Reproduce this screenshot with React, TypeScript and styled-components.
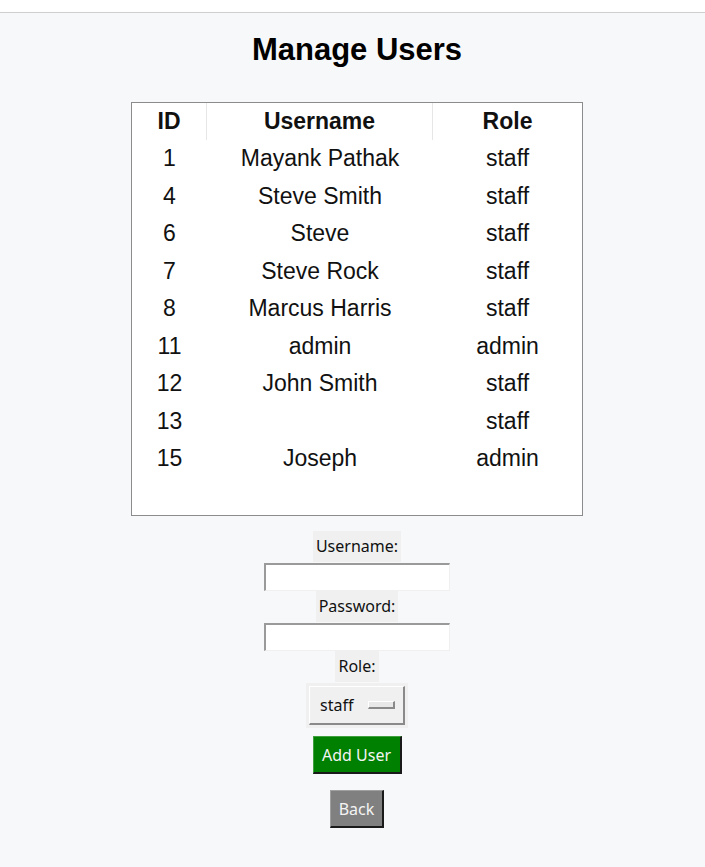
import React from "react";
import styled, { createGlobalStyle } from "styled-components";

const GlobalStyle = createGlobalStyle`
  html, body {
    margin: 0;
    padding: 0;
    background: #f7f8fa;
  }
`;

const TopBar = styled.div`
  height: 12px;
  background: #ffffff;
  border-bottom: 1px solid #cfcfcf;
`;

const Page = styled.div`
  display: flex;
  flex-direction: column;
  align-items: center;
  padding-left: 9px;
  padding-bottom: 38px;
`;

const Title = styled.h1`
  margin: 19px 0 0;
  height: 70px;
  font-family: "Liberation Sans", Arial, sans-serif;
  font-size: 31px;
  line-height: 36px;
  font-weight: bold;
  color: #000;
`;

const TableBox = styled.div`
  width: 450px;
  height: 412px;
  border: 1px solid #8c8c8c;
  background: #ffffff;
  font-family: "Liberation Sans", Arial, sans-serif;
  color: #111;
`;

const Row = styled.div<{ $head?: boolean }>`
  display: grid;
  grid-template-columns: 75px 226px 149px;
  height: ${(p) => (p.$head ? "37px" : "37.5px")};
  font-size: 23px;
  font-weight: ${(p) => (p.$head ? "bold" : "normal")};
`;

const Cell = styled.div<{ $head?: boolean; $last?: boolean }>`
  display: flex;
  align-items: center;
  justify-content: center;
  border-right: ${(p) =>
    p.$head && !p.$last ? "1px solid #e6e6e6" : "none"};
`;

const Form = styled.div`
  display: flex;
  flex-direction: column;
  align-items: center;
  margin-top: 15px;
  font-family: "Noto Sans", "Open Sans", sans-serif;
  font-size: 16px;
  color: #111;
`;

const Label = styled.div`
  background: #f0f0f0;
  padding: 0 3px;
  height: 31px;
  line-height: 31px;
`;

const Entry = styled.input`
  box-sizing: border-box;
  width: 186px;
  height: 28px;
  margin: 1px 0 0;
  padding: 0 3px;
  background: #fff;
  border-style: solid;
  border-width: 2px 1px 1px 2px;
  border-color: #9a9a9a #f0f0f0 #f0f0f0 #9a9a9a;
  outline: none;
  font: inherit;
`;

const MenuFrame = styled.div`
  margin-top: 1px;
  padding: 3px;
  background: #f0f0f0;
`;

const MenuButton = styled.div`
  box-sizing: border-box;
  display: flex;
  align-items: center;
  width: 96px;
  height: 39px;
  padding: 0 8px 0 10px;
  background: #f0f0f0;
  border-style: solid;
  border-width: 1px 2px 2px 1px;
  border-color: #ffffff #8a8a8a #8a8a8a #ffffff;
  font-size: 16px;
`;

const Indicator = styled.span`
  margin-left: auto;
  width: 24px;
  height: 5px;
  background: #e8e8e8;
  border-style: solid;
  border-width: 1px 2px 2px 1px;
  border-color: #ffffff #8a8a8a #8a8a8a #ffffff;
`;

const Button = styled.button<{ $bg: string; $top: number; $width: number }>`
  box-sizing: border-box;
  margin-top: ${(p) => p.$top}px;
  width: ${(p) => p.$width}px;
  height: 38px;
  padding: 0;
  background: ${(p) => p.$bg};
  color: #f4f4f4;
  border-style: solid;
  border-width: 1px 2px 2px 1px;
  border-color: rgba(255, 255, 255, 0.25) #1a1a1a #1a1a1a rgba(255, 255, 255, 0.25);
  font-family: "Noto Sans", "Open Sans", sans-serif;
  font-size: 16px;
  cursor: pointer;
`;

const users = [
  { id: 1, name: "Mayank Pathak", role: "staff" },
  { id: 4, name: "Steve Smith", role: "staff" },
  { id: 6, name: "Steve", role: "staff" },
  { id: 7, name: "Steve Rock", role: "staff" },
  { id: 8, name: "Marcus Harris", role: "staff" },
  { id: 11, name: "admin", role: "admin" },
  { id: 12, name: "John Smith", role: "staff" },
  { id: 13, name: "", role: "staff" },
  { id: 15, name: "Joseph", role: "admin" },
];

const App: React.FC = () => {
  return (
    <>
      <GlobalStyle />
      <TopBar />
      <Page>
        <Title>Manage Users</Title>
        <TableBox>
          <Row $head>
            <Cell $head>ID</Cell>
            <Cell $head>Username</Cell>
            <Cell $head $last>
              Role
            </Cell>
          </Row>
          {users.map((u) => (
            <Row key={u.id}>
              <Cell>{u.id}</Cell>
              <Cell>{u.name}</Cell>
              <Cell>{u.role}</Cell>
            </Row>
          ))}
        </TableBox>
        <Form>
          <Label>Username:</Label>
          <Entry type="text" />
          <Label>Password:</Label>
          <Entry type="password" />
          <Label>Role:</Label>
          <MenuFrame>
            <MenuButton>
              staff
              <Indicator />
            </MenuButton>
          </MenuFrame>
          <Button $bg="#008000" $top={8} $width={89}>
            Add User
          </Button>
          <Button $bg="#808080" $top={16} $width={54}>
            Back
          </Button>
        </Form>
      </Page>
    </>
  );
};

export default App;
